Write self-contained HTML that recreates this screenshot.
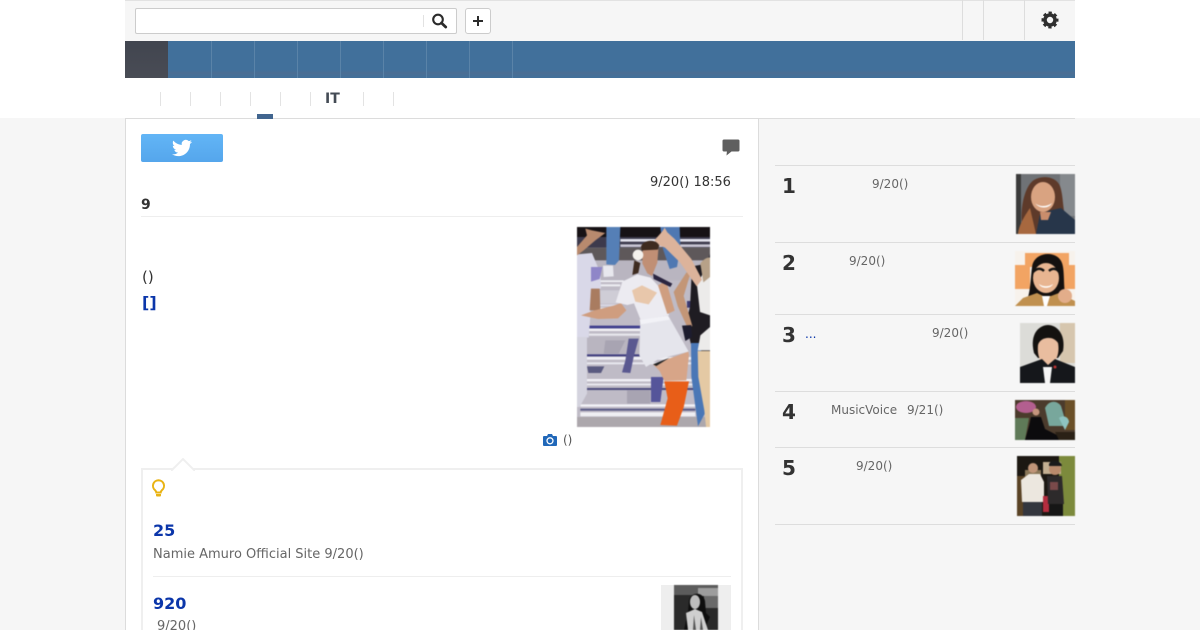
<!DOCTYPE html>
<html><head><meta charset="utf-8"><style>
html,body{margin:0;padding:0;width:1200px;height:630px;overflow:hidden;background:#fff}
body{position:relative;font-family:"DejaVu Sans","Liberation Sans",sans-serif;color:#333}
div,span,svg{position:absolute;display:block;white-space:nowrap}
.sep{width:1px;height:14px;top:92px;background:#e3e3e3}
.navsep{width:1px;top:41px;height:37px;background:#5a83a8}
.date{font-size:12px;color:#666;line-height:14px}
.rank{font-size:20px;font-weight:bold;color:#333;line-height:24px;left:782px}
.hr{left:775px;width:300px;height:1px;background:#ddd}
.t{font-size:13px;line-height:16px}
.b{color:#0b36aa;font-weight:bold}
.ph{filter:blur(.45px)}
</style></head><body>
<div style="left:0;top:118px;width:1200px;height:512px;background:#f6f6f6"></div>
<div style="left:125px;top:0;width:950px;height:41px;background:#f6f6f6;border-top:1px solid #e2e2e2;box-sizing:border-box"></div>
<div style="left:135px;top:8px;width:322px;height:26px;background:#fff;border:1px solid #ccc;border-radius:2px;box-sizing:border-box"></div>
<div style="left:423px;top:15px;width:1px;height:12px;background:#e2e2e2"></div>
<svg style="left:431px;top:13px" width="17" height="17" viewBox="0 0 17 17"><circle cx="7" cy="6.500" r="4.800" fill="none" stroke="#2b2b2b" stroke-width="2.100"/><path d="M10.500 10L14.700 14" stroke="#2b2b2b" stroke-width="2.800" stroke-linecap="round"/></svg>
<div style="left:465px;top:8px;width:26px;height:26px;background:#fff;border:1px solid #ccc;border-radius:3px;box-sizing:border-box"></div>
<svg style="left:472px;top:15px" width="12" height="12" viewBox="0 0 12 12"><path d="M6 1v10M1 6h10" stroke="#2b2b2b" stroke-width="2"/></svg>
<div style="left:962px;top:0;width:1px;height:40px;background:#ddd"></div>
<div style="left:983px;top:0;width:1px;height:40px;background:#ddd"></div>
<div style="left:1024px;top:0;width:1px;height:40px;background:#ddd"></div>
<svg style="left:1041px;top:11px" width="18" height="18" viewBox="0 0 18 18"><circle cx="9" cy="9" r="5" fill="none" stroke="#2f2f2f" stroke-width="3.600"/><circle cx="9" cy="9" r="7.200" fill="none" stroke="#2f2f2f" stroke-width="2.600" stroke-dasharray="3.200 2.450" stroke-dashoffset="1.600"/></svg>

<div style="left:125px;top:41px;width:950px;height:37px;background:linear-gradient(#41709b 0,#41709b 78%,#4b6e93 86%,#41709b 100%)"></div>
<div style="left:125px;top:41px;width:43px;height:37px;background:linear-gradient(#41454f,#494c55)"></div>
<div class="navsep" style="left:211px"></div><div class="navsep" style="left:254px"></div><div class="navsep" style="left:297px"></div><div class="navsep" style="left:340px"></div><div class="navsep" style="left:383px"></div><div class="navsep" style="left:426px"></div><div class="navsep" style="left:469px"></div><div class="navsep" style="left:512px"></div>

<div class="sep" style="left:160px"></div><div class="sep" style="left:190px"></div><div class="sep" style="left:220px"></div><div class="sep" style="left:250px"></div><div class="sep" style="left:280px"></div><div class="sep" style="left:310px"></div><div class="sep" style="left:363px"></div><div class="sep" style="left:393px"></div>
<div style="left:325px;top:91px;font-size:14px;font-weight:bold;color:#444b55;line-height:16px">IT</div>

<div style="left:125px;top:118px;width:634px;height:520px;background:#fff;border:1px solid #dcdcdc;box-sizing:border-box"></div>
<div style="left:759px;top:118px;width:316px;height:1px;background:#ddd"></div>
<div style="left:257px;top:114px;width:16px;height:5px;background:#41658f"></div>

<div style="left:141px;top:134px;width:82px;height:28px;background:linear-gradient(#62b5f6,#55a6ec);border-radius:2px"></div>
<svg style="left:172px;top:138px" width="20" height="20" viewBox="0 0 24 24"><path fill="#fff" d="M23.953 4.57a10 10 0 01-2.825.775 4.958 4.958 0 002.163-2.723c-.951.555-2.005.959-3.127 1.184a4.92 4.92 0 00-8.384 4.482C7.69 8.095 4.067 6.13 1.64 3.162a4.822 4.822 0 00-.666 2.475c0 1.71.87 3.213 2.188 4.096a4.904 4.904 0 01-2.228-.616v.06a4.923 4.923 0 003.946 4.827 4.996 4.996 0 01-2.212.085 4.936 4.936 0 004.604 3.417 9.867 9.867 0 01-6.102 2.105c-.39 0-.779-.023-1.17-.067a13.995 13.995 0 007.557 2.209c9.053 0 13.998-7.496 13.998-13.985 0-.21 0-.42-.015-.63A9.935 9.935 0 0024 4.59z"/></svg>
<svg style="left:722px;top:139px" width="18" height="17" viewBox="0 0 18 17"><path fill="#5f5f5f" d="M2 .5h14a1.500 1.500 0 011.500 1.500v9a1.500 1.500 0 01-1.500 1.500H9.500L4.500 16.500l.4-4H2A1.500 1.500 0 01.5 11V2A1.500 1.500 0 012 .5z"/></svg>
<div class="t" style="left:650px;top:175px;color:#333">9/20() 18:56</div>
<div style="left:141px;top:197px;font-size:14px;font-weight:bold;line-height:16px;color:#333">9</div>
<div style="left:141px;top:216px;width:602px;height:1px;background:#eee"></div>
<div style="left:142px;top:268px;font-size:15px;line-height:18px;color:#333">()</div>
<div class="b" style="left:142px;top:293px;font-size:16px;line-height:20px">[]</div>

<svg class="ph" style="left:577px;top:227px" width="133" height="200" viewBox="0 0 399 600" preserveAspectRatio="none">
<rect width="399" height="600" fill="#bfbbc6"/>
<rect width="399" height="30" fill="#171215"/>
<rect y="30" width="399" height="32" fill="#3d3a4c"/>
<rect y="62" width="399" height="40" fill="#5e585a"/>
<rect y="100" width="399" height="60" fill="#b9b5c0"/>
<rect y="36" x="130" width="269" height="8" fill="#e4e4ee"/><rect y="52" x="130" width="269" height="8" fill="#c9c6d4"/>
<rect y="160" x="70" width="70" height="5" fill="#f1f1f5"/><rect y="172" x="70" width="60" height="6" fill="#eeeef3"/>
<rect y="190" x="70" width="60" height="40" fill="#cfcdd6"/>
<rect y="232" x="65" width="60" height="6" fill="#d8d8e4"/><rect y="242" x="65" width="60" height="6" fill="#e8e8ee"/>
<rect y="222" x="330" width="20" height="20" fill="#3c3a72"/>
<rect y="296" x="36" width="154" height="8" fill="#3d3c8c"/><rect y="305" x="36" width="154" height="7" fill="#f2f2f5"/><rect y="320" x="36" width="160" height="6" fill="#e9e9ee"/>
<rect y="330" x="30" width="160" height="50" fill="#b9b5c0"/>
<rect y="382" x="24" width="180" height="6" fill="#3c3b7d"/><rect y="390" x="24" width="320" height="8" fill="#f0f0f5"/><rect y="406" x="24" width="320" height="6" fill="#e8e8ef"/>
<rect y="456" x="24" width="330" height="7" fill="#f2f2f7"/><rect y="470" x="24" width="330" height="5" fill="#eeeef4"/><rect y="483" x="24" width="330" height="6" fill="#4b4a7c"/>
<rect y="532" x="10" width="345" height="7" fill="#f3f3f7"/><rect y="545" x="10" width="345" height="6" fill="#5a5a85"/><rect y="556" x="10" width="345" height="12" fill="#efeff3"/>
<rect y="570" width="399" height="30" fill="#aca7ac"/>
<path d="M155 335h30l-15 55-10 48-25-2 10-35z" fill="#5a5890"/>
<path d="M30 418h52l-10 20H34z" fill="#5a5a80"/>
<path d="M222 450h38l-10 75h-28z" fill="#55559a"/>
<path d="M85 340h60l-20 40H80zM150 490h70v40h-70z" fill="#a8a4b2"/>
<path d="M88 0h42l-4 100-12 14-26-2z" fill="#557fb6"/>
<path d="M78 116h30l2 32-30 2z" fill="#e8e8ee"/>
<path d="M250 0h58l2 60-10 60-22 6-20-60z" fill="#4f78b2"/>
<path d="M0 82l45-4 25 60 2 45-30 24-2 60-5 65-35 0z" fill="#d9d8e8"/>
<path d="M42 120h34l-8 36-26 8z" fill="#8f86c8"/>
<path d="M0 60L30 25l-5-20 20 5 40 8-30 22L20 70l-20 15z" fill="#b88a6e"/>
<path d="M42 185h26l2 65-32 0z" fill="#a97c60"/>
<path d="M0 330h30v170l-22 40-8 0z" fill="#d4d3de"/>
<path d="M345 118l45-8 9-30v500l-60-240-10-60 10-40z" fill="#1f1c22"/>
<path d="M342 348h30l2 130 21 60-32 60-20-150z" fill="#4a77b6"/>
<path d="M360 175l39-80v170l-30-10zM370 325l29-25v70h-37z" fill="#ecebea"/>
<path d="M362 372h37v228h-12l-5-50-18-100z" fill="#e4c9a4"/>
<path d="M370 110c10-16 25-20 29-18v58l-20 16z" fill="#b7a188"/>
<path d="M290 195l38-58 14-4-22 74 26 90-14 6-30-66z" fill="#c39677"/>
<path d="M315 296l28-2 2 36-20 12z" fill="#1d1c2e"/>
<path d="M232 40l25-28 6-10 8 14 22 20 50 60 32 62-16 20-50-72-45-44-15-6z" fill="#dcb39b"/>
<path d="M12 265l38-14 60-15 22-8 16 22-25 24-60 2z" fill="#cf9d7f"/>
<path d="M190 280l85-12 60 106-90 22-38 24-20-35z" fill="#e5e5ec"/>
<path d="M188 278l85-12 6 12-88 14z" fill="#f2f2f7"/>
<path d="M116 226l20-62 45-22 40 10 35 38 20 75-85 14-20-50-20 5z" fill="#ecebf1"/>
<path d="M165 190l30-15 45 22-25 35-40-8z" fill="#e8c7ab"/>
<path d="M243 175l24-14 26 90-22 10z" fill="#cf9e80"/>
<path d="M228 140l58 30-6 10-50-24z" fill="#2b2540"/>
<path d="M228 412l106-38 2 10-8 76-66 2-14-30z" fill="#d7a588"/>
<path d="M228 412l50-20-40 25z" fill="#222"/>
<path d="M262 463l74 0-16 78-20 55-50-2 22-80z" fill="#e85e18"/>
<path d="M196 75c4-16 40-22 48-8l-3 40-16 40-14-8-15-30z" fill="#c08f75"/>
<path d="M192 58c10-22 46-22 55-2l-5 12-48 2zM172 100l18 8-6 30-18 6z" fill="#3e2b20"/>
<circle cx="183" cy="84" r="16" fill="#f4f1ec"/>
</svg>

<svg style="left:543px;top:434px" width="14" height="12" viewBox="0 0 14 12"><path fill="#2168b9" d="M1 2h3l1-2h4l1 2h3a1 1 0 011 1v8a1 1 0 01-1 1H1a1 1 0 01-1-1V3a1 1 0 011-1z"/><circle cx="7" cy="6.800" r="3" fill="none" stroke="#fff" stroke-width="1.300"/></svg>
<div style="left:563px;top:433px;font-size:12px;line-height:14px;color:#555">()</div>

<div style="left:141px;top:468px;width:602px;height:170px;background:#fff;border:2px solid #efefef;box-sizing:border-box"></div>
<svg style="left:171px;top:458px" width="24" height="13" viewBox="0 0 24 13"><path d="M0 12h1L12 1l11 11h1" fill="#fff" stroke="#efefef" stroke-width="2"/></svg>
<svg style="left:151px;top:479px" width="15" height="19" viewBox="0 0 15 19"><path d="M7.500 1.200a5.600 5.600 0 00-3.400 10c.9.800 1.100 1.500 1.200 2.300h4.400c.1-.8.300-1.500 1.200-2.300a5.600 5.600 0 00-3.400-10z" fill="none" stroke="#e9b313" stroke-width="2"/><path d="M5 15h5v1.500a1 1 0 01-1 1H6a1 1 0 01-1-1z" fill="#e9b313"/></svg>
<div class="b" style="left:153px;top:521px;font-size:16px;line-height:20px">25</div>
<div class="t" style="left:153px;top:547px;color:#666">Namie Amuro Official Site 9/20()</div>
<div style="left:153px;top:576px;width:578px;height:1px;background:#eee"></div>
<div class="b" style="left:153px;top:594px;font-size:16px;line-height:20px">920</div>
<div class="t" style="left:157px;top:619px;color:#666">9/20()</div>
<div style="left:661px;top:585px;width:70px;height:50px;background:#eee"></div>
<svg class="ph" style="left:674px;top:585px" width="44" height="45" viewBox="0 0 44 45"><rect width="44" height="45" fill="#2a2a2a"/><rect width="44" height="10" fill="#5c5c5c"/><rect y="3" x="24" width="20" height="8" fill="#9d9d9d"/><rect y="11" x="30" width="14" height="12" fill="#6a6a6a"/><path d="M15 15c2-8 14-9 16 1l1 12 4 4-6 13H10l4-18z" fill="#0e0e0e"/><ellipse cx="21" cy="17" rx="5" ry="7" fill="#bdbdbd"/><path d="M12 28l9-4 7 3 6 18H14z" fill="#cfcfcf"/><path d="M20 30l2 15h-3zM27 32l2 13h-3z" fill="#555"/></svg>

<div class="hr" style="top:165px"></div>
<div class="rank" style="top:174px">1</div><div class="date" style="left:872px;top:177px">9/20()</div>
<svg class="ph" style="left:1016px;top:174px" width="59" height="60" viewBox="0 0 59 60"><rect width="59" height="60" fill="#6f7276"/><rect width="5" height="60" fill="#3a3a3a"/><path d="M44 0h15v42H44z" fill="#85898d"/><path d="M8 60c-6-20 0-48 10-54 8-5 22-4 26 6 4 12 2 24 7 34l-8 14z" fill="#5e3a2a"/><path d="M2 60c1-10 8-20 12-26l6 26z" fill="#a7683f"/><ellipse cx="27" cy="23" rx="12" ry="15" fill="#d9a381"/><path d="M19 29c4 4 12 4 17 0-3 6-13 6-17 0z" fill="#fff"/><path d="M20 60l4-20 12-4 9-2 14 12v14z" fill="#27364a"/><path d="M24 38h11l-3 8h-7z" fill="#c98d6c"/></svg>

<div class="hr" style="top:242px"></div>
<div class="rank" style="top:251px">2</div><div class="date" style="left:849px;top:254px">9/20()</div>
<svg class="ph" style="left:1015px;top:251px" width="60" height="55" viewBox="0 0 60 55"><rect width="60" height="55" fill="#f7f2ec"/><rect x="10" y="2" width="44" height="14" fill="#f2a463"/><rect y="14" x="0" width="15" height="24" fill="#f2a463"/><rect x="44" y="14" width="16" height="24" fill="#f2a463"/><rect x="15" y="34" width="30" height="10" fill="#fff"/><path d="M13 46c3-8 3-30 5-34 5-12 25-12 29 0 3 8 1 26 4 34z" fill="#15110f"/><ellipse cx="31" cy="27" rx="13" ry="15" fill="#e8b591"/><path d="M18 21c4-4 8-4 11-1M34 20c3-3 8-3 10 1" stroke="#111" stroke-width="2.400" fill="none"/><path d="M24 33c4 3 10 3 14 0-2 5-12 5-14 0z" fill="#fff"/><path d="M0 55l8-8 14-5 6 3h8l8-3 16 8v5z" fill="#c0904f"/><path d="M27 45h8l-3 10h-3z" fill="#fff"/><circle cx="50" cy="45" r="7" fill="#e2ad8a"/></svg>

<div class="hr" style="top:314px"></div>
<div class="rank" style="top:323px">3</div>
<div style="left:805px;top:327px;font-size:12px;line-height:14px;color:#0b36aa">...</div>
<div class="date" style="left:932px;top:326px">9/20()</div>
<svg class="ph" style="left:1020px;top:323px" width="55" height="60" viewBox="0 0 55 60"><rect width="55" height="60" fill="#dcdcd8"/><rect x="40" width="15" height="40" fill="#d6c6ae"/><path d="M14 30C9 10 20 2 28 2s18 8 15 26l-5 7H18z" fill="#141210"/><path d="M18 22c2-8 15-10 20-2 2 10-2 22-10 22s-11-10-10-20z" fill="#e9bd9f"/><path d="M0 60V44l22-8 6 6 7-6 20 8v16z" fill="#15171b"/><path d="M23 44h9l-2 16h-5z" fill="#f5f5f5"/><circle cx="35" cy="44" r="1.500" fill="#b33"/></svg>

<div class="hr" style="top:391px"></div>
<div class="rank" style="top:400px">4</div>
<div class="date" style="left:831px;top:403px">MusicVoice</div><div class="date" style="left:907px;top:403px">9/21()</div>
<svg class="ph" style="left:1015px;top:400px" width="60" height="40" viewBox="0 0 60 40"><rect width="60" height="40" fill="#4b3b2c"/><ellipse cx="11" cy="7" rx="10" ry="6" fill="#b35f8f"/><path d="M30 8c4-8 12-8 16-2l6 20H34z" fill="#78a79c"/><rect x="50" width="10" height="30" fill="#6b5028"/><path d="M0 18h14l-4 22H0z" fill="#5f7a58"/><circle cx="21" cy="12" r="3.500" fill="#c4957d"/><path d="M16 17h10l4 12 12 6 2 5H10l4-14z" fill="#0c0b0d"/><path d="M44 18c5-4 10 0 10 4l-4 8z" fill="#8ec4c0"/><path d="M40 32h20v8H44z" fill="#2a2116"/></svg>

<div class="hr" style="top:447px"></div>
<div class="rank" style="top:456px">5</div><div class="date" style="left:856px;top:459px">9/20()</div>
<svg class="ph" style="left:1017px;top:456px" width="58" height="60" viewBox="0 0 58 60"><rect width="58" height="60" fill="#1c1812"/><rect x="42" width="16" height="60" fill="#7c8a3c"/><rect y="20" width="8" height="40" fill="#5a4325"/><rect x="26" y="6" width="18" height="12" fill="#c4b092"/><rect x="8" y="14" width="16" height="20" fill="#8a7758"/><circle cx="16" cy="12" r="5" fill="#c09578"/><path d="M4 24l8-6h11l4 8v20H5z" fill="#ece7df"/><rect x="6" y="46" width="19" height="14" fill="#33363e"/><path d="M26 40h6v16h-6z" fill="#b52d3f"/><circle cx="38" cy="13" r="6" fill="#b98a6c"/><path d="M32 8c2-5 12-4 13 2H32z" fill="#1a1a1a"/><path d="M30 20h15l2 28H31z" fill="#2d2a2b"/><path d="M33 26h8v8h-8z" fill="#7a4a4a"/><rect x="32" y="48" width="14" height="12" fill="#161616"/></svg>
<div class="hr" style="top:524px"></div>
</body></html>
